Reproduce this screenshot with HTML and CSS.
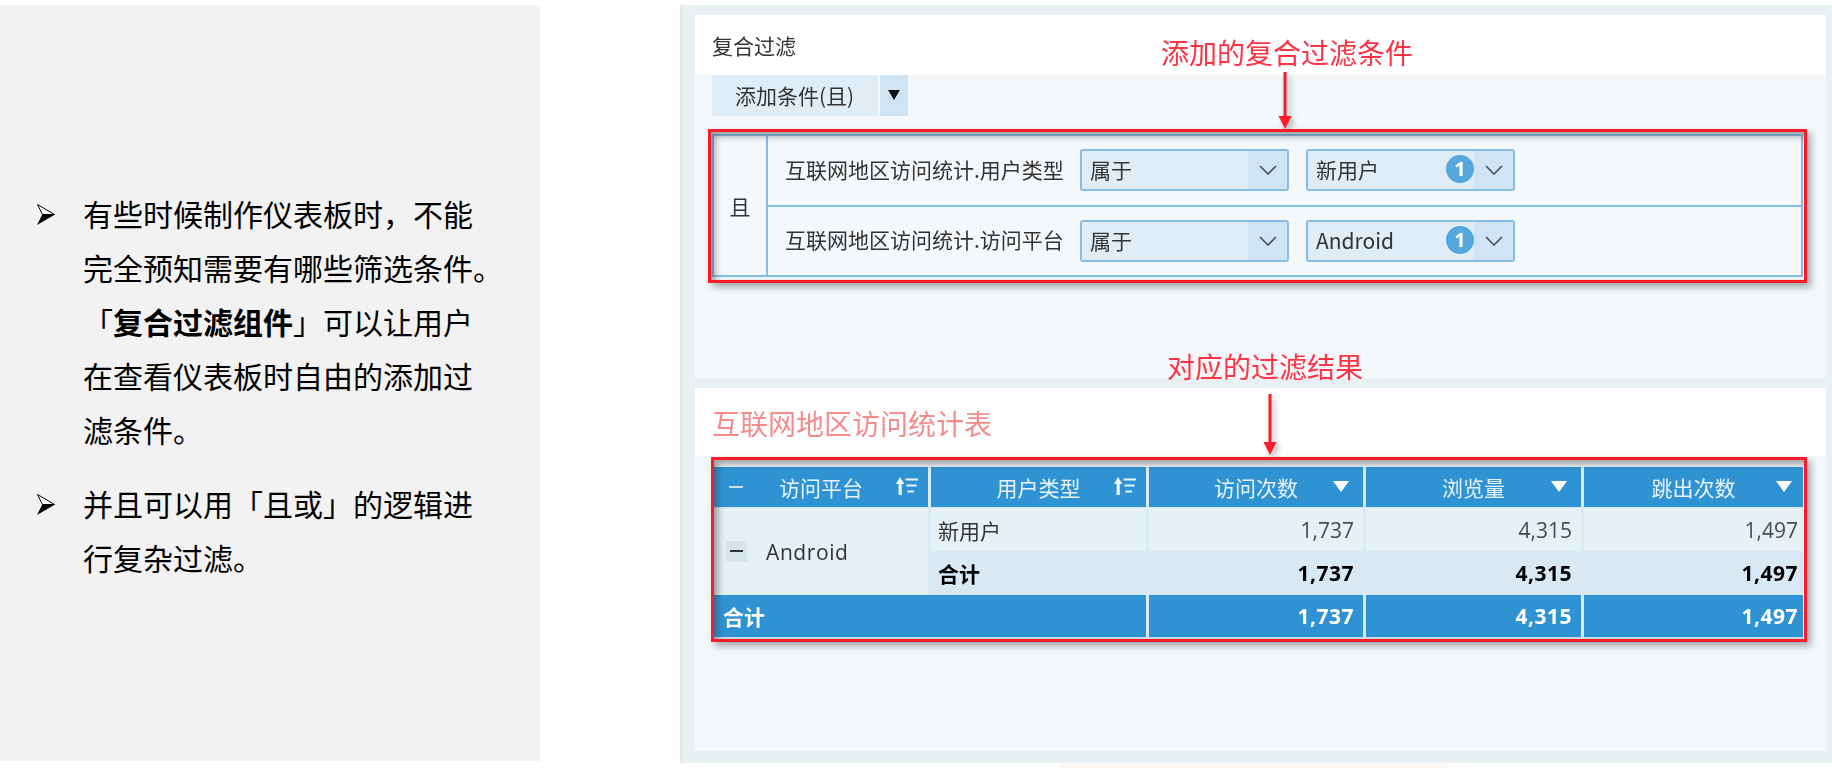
FILE: index.html
```html
<!DOCTYPE html>
<html lang="zh-CN">
<head>
<meta charset="utf-8">
<title>复合过滤组件</title>
<link rel="stylesheet" href="styles.css">
</head>
<body>
<main class="page">
  <section class="intro">
    <div class="point">
      <svg class="bullet" viewBox="0 0 18 21"><path d="M0.5 0.5L17.5 10.5L5.5 10.5Z" fill="#fff" stroke="#000" stroke-width="1"/><path d="M0 21L18 10.5L5.5 10Z" fill="#000"/></svg>
      <p>有些时候制作仪表板时，不能<br>完全预知需要有哪些筛选条件。<br>「<b>复合过滤组件</b>」可以让用户<br>在查看仪表板时自由的添加过<br>滤条件。</p>
    </div>
    <div class="point">
      <svg class="bullet" viewBox="0 0 18 21"><path d="M0.5 0.5L17.5 10.5L5.5 10.5Z" fill="#fff" stroke="#000" stroke-width="1"/><path d="M0 21L18 10.5L5.5 10Z" fill="#000"/></svg>
      <p>并且可以用「且或」的逻辑进<br>行复杂过滤。</p>
    </div>
  </section>

  <section class="shot">
    <div class="widget filter">
      <h2 class="widget-title">复合过滤</h2>
      <div class="widget-body">
        <div class="add">
          <span class="add-label">添加条件(且)</span>
          <span class="add-caret"><i class="tri-black"></i></span>
        </div>
        <div class="cond">
          <div class="cond-logic">且</div>
          <div class="cond-rows">
            <div class="cond-row">
              <span class="cond-field">互联网地区访问统计.用户类型</span>
              <div class="select">
                <span class="select-value">属于</span>
                <span class="select-caret"><svg class="chev" viewBox="0 0 18 10"><path d="M1 1L9 9L17 1"/></svg></span>
              </div>
              <div class="select">
                <span class="select-value">新用户<span class="badge">1</span></span>
                <span class="select-caret"><svg class="chev" viewBox="0 0 18 10"><path d="M1 1L9 9L17 1"/></svg></span>
              </div>
            </div>
            <div class="cond-row">
              <span class="cond-field">互联网地区访问统计.访问平台</span>
              <div class="select">
                <span class="select-value">属于</span>
                <span class="select-caret"><svg class="chev" viewBox="0 0 18 10"><path d="M1 1L9 9L17 1"/></svg></span>
              </div>
              <div class="select">
                <span class="select-value">Android<span class="badge">1</span></span>
                <span class="select-caret"><svg class="chev" viewBox="0 0 18 10"><path d="M1 1L9 9L17 1"/></svg></span>
              </div>
            </div>
          </div>
        </div>
      </div>
    </div>

    <div class="widget report">
      <h2 class="widget-title report-title">互联网地区访问统计表</h2>
      <div class="widget-body report-body">
        <div class="grid">
          <div class="th"><i class="th-minus"></i>访问平台<svg class="sort" viewBox="0 0 22 18"><path d="M4 0L8.4 7H5.8V18H2.6V7H0Z"/><path d="M9.5 1.5H22V3.5H9.5ZM10.5 7.5H20.5V9.5H10.5ZM11.5 13.5H18V15.5H11.5Z"/></svg></div>
          <div class="th">用户类型<svg class="sort" viewBox="0 0 22 18"><path d="M4 0L8.4 7H5.8V18H2.6V7H0Z"/><path d="M9.5 1.5H22V3.5H9.5ZM10.5 7.5H20.5V9.5H10.5ZM11.5 13.5H18V15.5H11.5Z"/></svg></div>
          <div class="th">访问次数<i class="tri-white"></i></div>
          <div class="th">浏览量<i class="tri-white"></i></div>
          <div class="th th-last">跳出次数<i class="tri-white"></i></div>

          <div class="td-group"><span class="td-minus"></span><span class="group-name">Android</span></div>
          <div class="td td-text">新用户</div>
          <div class="td num">1,737</div>
          <div class="td num">4,315</div>
          <div class="td num num-last">1,497</div>

          <div class="sub sub-text">合计</div>
          <div class="sub num">1,737</div>
          <div class="sub num">4,315</div>
          <div class="sub num num-last">1,497</div>

          <div class="total total-label">合计</div>
          <div class="total num">1,737</div>
          <div class="total num">4,315</div>
          <div class="total num num-last">1,497</div>
        </div>
      </div>
    </div>

    <span class="note note-top">添加的复合过滤条件</span>
    <svg class="arrow arrow-top" viewBox="0 0 16 58"><path d="M8 0V46"/><path class="head" d="M1.5 44H14.5L8 57Z"/></svg>
    <div class="mark mark-top"></div>

    <span class="note note-bottom">对应的过滤结果</span>
    <svg class="arrow arrow-bottom" viewBox="0 0 16 62"><path d="M8 0V50"/><path class="head" d="M1.5 48H14.5L8 61Z"/></svg>
    <div class="mark mark-bottom"></div>
    <div class="edge-strip"></div>
  </section>
</main>
</body>
</html>
```
FILE: styles.css
```css
* { box-sizing: border-box; }
html, body { margin: 0; padding: 0; background: #fff; }
body {
  width: 1832px;
  height: 768px;
  overflow: hidden;
  font-family: "Noto Sans CJK SC", "Noto Sans", sans-serif;
}
.page {
  display: flex;
  padding-top: 5px;
  height: 768px;
  align-items: flex-start;
}

/* left explanation panel */
.intro {
  width: 540px;
  height: 756px;
  flex: none;
  background: #f2f2f2;
  padding: 181px 0 0 37px;
  color: #000;
}
.point {
  display: flex;
  align-items: flex-start;
  margin-bottom: 20px;
}
.bullet {
  width: 18px;
  height: 21px;
  flex: none;
  margin: 18px 28px 0 0;
}
.point p {
  margin: 0;
  font-size: 30px;
  line-height: 54px;
  white-space: nowrap;
}
.point b { font-weight: 700; }

/* screenshot panel */
.shot {
  position: relative;
  margin-left: 140px;
  width: 1152px;
  height: 758px;
  flex: none;
  display: flex;
  flex-direction: column;
  gap: 10px;
  padding: 10px 6px 12px 12px;
  background: #e9f0f4;
  border-left: 3px solid #e6e8ea;
  color: #333;
  filter: blur(0.35px);
}
.widget {
  display: flex;
  flex-direction: column;
  background: #f4f8fb;
}
.filter { height: 363px; flex: none; }
.report { flex: 1; }
.widget-title {
  margin: 0;
  height: 60px;
  flex: none;
  background: #fff;
  padding: 16px 0 0 17px;
  font-size: 21px;
  line-height: 28px;
  font-weight: 400;
  color: #333;
}
.report-title {
  height: 68px;
  padding: 16px 0 0 17px;
  font-size: 28px;
  line-height: 38px;
  color: #f58c8c;
}
.widget-body { flex: 1; padding-left: 17px; }

/* add condition */
.add { display: flex; height: 41px; gap: 2px; font-size: 21px; }
.add-label {
  width: 166px;
  background: #e1edf6;
  padding-left: 23px;
  line-height: 41px;
}
.add-caret {
  width: 28px;
  background: #cfe4f4;
  display: flex;
  justify-content: center;
  padding-top: 15px;
}
.tri-black {
  display: block;
  width: 0;
  height: 0;
  border-left: 6px solid transparent;
  border-right: 6px solid transparent;
  border-top: 10px solid #111;
}

/* condition table */
.cond {
  display: flex;
  margin-top: 18px;
  width: 1091px;
  height: 143px;
  border: 2px solid #85bde6;
}
.cond-logic {
  width: 54px;
  flex: none;
  border-right: 2px solid #85bde6;
  display: flex;
  align-items: center;
  justify-content: center;
  font-size: 21px;
}
.cond-rows { flex: 1; display: flex; flex-direction: column; }
.cond-row {
  flex: 1;
  display: flex;
  align-items: center;
  padding-left: 17px;
  font-size: 21px;
}
.cond-row + .cond-row { border-top: 2px solid #85bde6; }
.cond-field {
  width: 295px;
  flex: none;
  padding-bottom: 3px;
  white-space: nowrap;
}
.select {
  width: 209px;
  height: 42px;
  flex: none;
  display: flex;
  margin-right: 17px;
  border: 2px solid #85bde6;
  border-radius: 3px;
  background: #e1edf6;
}
.select-value {
  flex: 1;
  display: flex;
  align-items: center;
  justify-content: space-between;
  padding: 0 0 2px 8px;
  font-size: 21px;
}
.select-caret {
  width: 39px;
  flex: none;
  background: #cfe4f4;
  display: flex;
  align-items: center;
  justify-content: center;
}
.chev { width: 18px; height: 10px; }
.chev path { fill: none; stroke: #44505c; stroke-width: 1.6; }
.badge {
  width: 28px;
  height: 28px;
  border-radius: 50%;
  background: #56a8dc;
  color: #fff;
  font-family: "Open Sans", sans-serif;
  font-weight: 700;
  font-size: 20px;
  line-height: 28px;
  text-align: center;
}

/* pivot table */
.report-body { padding: 11px 0 0 19px; }
.grid {
  display: grid;
  width: 1089px;
  grid-template-columns: 217px 218px 217px 218px 219px;
  grid-template-rows: 41px 43px 44px 44px;
  font-size: 21px;
  color: #333;
}
.th {
  position: relative;
  background: #2f93d3;
  color: #e9f3fa;
  border-right: 3px solid #dceaf5;
  border-bottom: 1px solid #cfe2f0;
  display: flex;
  align-items: center;
  justify-content: center;
}
.th-last { border-right: 0; }
.th-minus {
  position: absolute;
  left: 15px;
  top: 19px;
  width: 14px;
  height: 2px;
  background: #cfe0ea;
}
.sort {
  position: absolute;
  right: 10px;
  top: 10px;
  width: 22px;
  height: 18px;
  fill: #e9f3fa;
}
.tri-white {
  position: absolute;
  right: 14px;
  top: 14px;
  width: 0;
  height: 0;
  border-left: 8px solid transparent;
  border-right: 8px solid transparent;
  border-top: 11px solid #fff;
}
.th-last .tri-white { right: 11px; }
.td-group {
  grid-row: span 2;
  background: #e6f0f7;
  border-right: 3px solid #d8e8f4;
  display: flex;
  align-items: center;
  padding-left: 12px;
}
.td-minus {
  position: relative;
  width: 21px;
  height: 21px;
  flex: none;
  background: #d8e4ec;
  margin-right: 19px;
}
.td-minus::after {
  content: "";
  position: absolute;
  left: 4px;
  top: 9px;
  width: 13px;
  height: 2px;
  background: #333;
}
.group-name {
  font-family: "Open Sans", sans-serif;
  font-size: 21px;
  letter-spacing: 0.6px;
  color: #333;
}
.td {
  background: #e6f0f7;
  border-right: 3px solid #d8e8f4;
  display: flex;
  align-items: center;
}
.td-text { padding-left: 7px; }
.sub {
  background: #d8e8f4;
  display: flex;
  align-items: center;
  color: #000;
  font-weight: 700;
}
.sub-text { padding-left: 7px; }
.total {
  background: #2f93d3;
  color: #fff;
  font-weight: 700;
  border-right: 3px solid #dceaf5;
  border-bottom: 2px solid #cfe2f0;
  display: flex;
  align-items: center;
}
.total-label {
  grid-column: span 2;
  padding-left: 9px;
}
.num {
  justify-content: flex-end;
  padding-right: 9px;
  font-family: "Open Sans", sans-serif;
  font-size: 21px;
  letter-spacing: 0;
}
.td.num { color: #4a4a4a; }
.sub.num, .total.num { letter-spacing: 0.5px; }
.sub.num { border-right: 3px solid transparent; }
.num-last, .sub.num-last { border-right: 0; padding-right: 5px; }

/* annotations over the screenshot */
.note {
  position: absolute;
  font-size: 28px;
  line-height: 38px;
  color: #ff3344;
  white-space: nowrap;
}
.note-top { left: 478px; top: 28px; }
.note-bottom { left: 484px; top: 342px; }
.arrow {
  position: absolute;
  width: 16px;
  filter: drop-shadow(3px 3px 3px rgba(0, 0, 0, 0.3));
}
.arrow path { fill: none; stroke: #ff1a2a; stroke-width: 3; }
.arrow path.head { fill: #ff1a2a; stroke: none; }
.arrow-top { left: 594px; top: 67px; height: 58px; }
.arrow-bottom { left: 579px; top: 389px; height: 62px; }
.mark {
  position: absolute;
  border: 3px solid #ff1a2a;
  box-shadow: 4px 4px 7px rgba(60, 70, 75, 0.45), inset 4px 4px 7px rgba(60, 70, 75, 0.5);
}
.mark-top { left: 25px; top: 124px; width: 1099px; height: 154px; }
.mark-bottom { left: 28px; top: 452px; width: 1096px; height: 185px; }
.edge-strip {
  position: absolute;
  left: 377px;
  top: 758px;
  width: 388px;
  height: 5px;
  background: #f8f5f5;
}
```
